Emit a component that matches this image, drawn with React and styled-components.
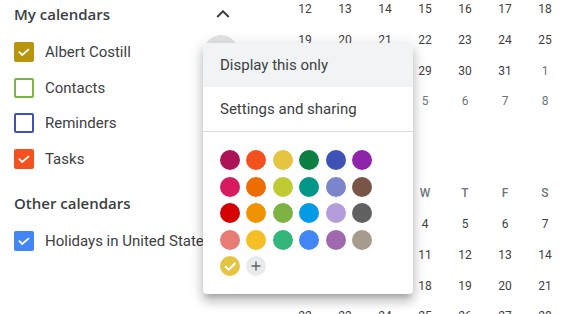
import React from 'react';
import styled, { createGlobalStyle } from 'styled-components';

const GlobalStyle = createGlobalStyle`
  body {
    margin: 0;
    background: #fff;
    font-family: Roboto, "Liberation Sans", sans-serif;
    overflow: hidden;
  }
`;

const Page = styled.div`
  position: relative;
  display: flex;
  width: 577px;
  height: 314px;
  overflow: hidden;
  background: #fff;
`;

const Sidebar = styled.div`
  width: 285px;
  box-sizing: border-box;
  padding: 0 47px 0 14px;
  flex-shrink: 0;
`;

const SectionHeader = styled.div`
  display: flex;
  align-items: center;
  justify-content: space-between;
  height: 28px;
  margin-top: ${p => p.$top || 0}px;
  margin-bottom: 6.5px;
  font-family: "Open Sans", Roboto, sans-serif;
  font-size: 15px;
  font-weight: 600;
  color: #3c4043;
`;

const Chevron = styled.svg`
  width: 14px;
  height: 8px;
  margin-right: 8px;
`;

const CalRow = styled.div`
  display: flex;
  align-items: center;
  height: 35.5px;
  gap: 11px;
`;

const Box = styled.div`
  width: 20px;
  height: 20px;
  box-sizing: border-box;
  border-radius: 2px;
  border: 2px solid ${p => p.$color};
  background: ${p => (p.$checked ? p.$color : '#fff')};
  display: flex;
  align-items: center;
  justify-content: center;
  flex-shrink: 0;
`;

const Label = styled.span`
  flex: 1;
  font-size: 15px;
  color: #3c4043;
  white-space: nowrap;
`;

const MoreButton = styled.div`
  width: 34px;
  height: 34px;
  border-radius: 50%;
  background: #e4e4e4;
  flex-shrink: 0;
`;

const Calendar = styled.div`
  width: 280px;
  margin-top: -6px;
  flex-shrink: 0;
`;

const Week = styled.div`
  display: grid;
  grid-template-columns: repeat(7, 40px);
  height: 30.7px;
`;

const Day = styled.div`
  display: flex;
  align-items: center;
  justify-content: center;
  font-size: 12px;
  color: ${p => (p.$muted ? '#70757a' : '#3c4043')};
`;

const WeekDay = styled(Day)`
  color: #70757a;
  font-weight: 500;
`;

const MonthTitle = styled.div`
  height: 30.7px;
  margin-top: 30.7px;
  display: flex;
  align-items: center;
  padding-left: 10px;
  font-size: 14px;
  font-weight: 500;
  color: #3c4043;
`;

const Popup = styled.div`
  position: absolute;
  left: 203px;
  top: 43px;
  width: 210px;
  background: #fff;
  border-radius: 4px;
  overflow: hidden;
  box-shadow: 0 8px 10px 1px rgba(0, 0, 0, 0.14), 0 3px 14px 2px rgba(0, 0, 0, 0.12),
    0 5px 5px -3px rgba(0, 0, 0, 0.2);
`;

const MenuItem = styled.div`
  height: 44px;
  display: flex;
  align-items: center;
  padding-left: 17px;
  font-size: 15px;
  color: #3c4043;
  background: ${p => (p.$hover ? '#f1f3f4' : '#fff')};
`;

const Divider = styled.div`
  height: 1px;
  background: #dadce0;
`;

const Swatches = styled.div`
  display: grid;
  grid-template-columns: repeat(6, 20px);
  gap: 6.6px 6.4px;
  padding: 18px 17px;
`;

const Swatch = styled.div`
  width: 20px;
  height: 20px;
  border-radius: 50%;
  background: ${p => p.$color};
  display: flex;
  align-items: center;
  justify-content: center;
`;

const Check = ({ size = 20 }) => (
  <svg width={size} height={size} viewBox="0 0 20 20">
    <path d="M3.6 9.6 L7.7 13.7 L16.2 6.4" fill="none" stroke="#fff" strokeWidth="2.2" />
  </svg>
);

const SwatchCheck = () => (
  <svg width="20" height="20" viewBox="0 0 20 20">
    <path d="M5 10.2 L8.8 13.6 L15.4 7" fill="none" stroke="#fff" strokeWidth="2" />
  </svg>
);

const Plus = () => (
  <svg width="20" height="20" viewBox="0 0 20 20">
    <path d="M10 5.5 V14.5 M5.5 10 H14.5" stroke="#5f6368" strokeWidth="1.4" />
  </svg>
);

const myCalendars = [
  { name: 'Albert Costill', color: '#b8950d', checked: true, more: true },
  { name: 'Contacts', color: '#7cb342' },
  { name: 'Reminders', color: '#3f51b5' },
  { name: 'Tasks', color: '#f4511e', checked: true },
];

const colors = [
  '#ad1457', '#f4511e', '#e4c441', '#0b8043', '#3f51b5', '#8e24aa',
  '#d81b60', '#ef6c00', '#c0ca33', '#009688', '#7986cb', '#795548',
  '#d50000', '#f09300', '#7cb342', '#039be5', '#b39ddb', '#616161',
  '#e67c73', '#f6bf26', '#33b679', '#4285f4', '#9e69af', '#a79b8e',
];

const range = (a, b) => Array.from({ length: b - a + 1 }, (_, i) => a + i);

const firstMonth = [
  range(12, 18).map(d => ({ d })),
  range(19, 25).map(d => ({ d })),
  [...range(26, 31).map(d => ({ d })), { d: 1, muted: true }],
  range(2, 8).map(d => ({ d, muted: true })),
];

const secondMonth = [range(1, 7), range(8, 14), range(15, 21), range(22, 28)];

const CalendarRow = ({ cal }) => (
  <CalRow>
    <Box $color={cal.color} $checked={cal.checked}>
      {cal.checked && <Check />}
    </Box>
    <Label>{cal.name}</Label>
    {cal.more && <MoreButton />}
  </CalRow>
);

export default function App() {
  return (
    <Page>
      <GlobalStyle />
      <Sidebar>
        <SectionHeader>
          My calendars
          <Chevron viewBox="0 0 14 8">
            <path d="M1.2 7 L7 1.3 L12.8 7" fill="none" stroke="#3c4043" strokeWidth="2" />
          </Chevron>
        </SectionHeader>
        {myCalendars.map(c => (
          <CalendarRow key={c.name} cal={c} />
        ))}
        <SectionHeader $top={12.5}>Other calendars</SectionHeader>
        <CalendarRow cal={{ name: 'Holidays in United States', color: '#4285f4', checked: true }} />
      </Sidebar>

      <Calendar>
        {firstMonth.map((week, i) => (
          <Week key={i}>
            {week.map((x, j) => (
              <Day key={j} $muted={x.muted}>{x.d}</Day>
            ))}
          </Week>
        ))}
        <MonthTitle>November 2020</MonthTitle>
        <Week>
          {['S', 'M', 'T', 'W', 'T', 'F', 'S'].map((w, i) => (
            <WeekDay key={i}>{w}</WeekDay>
          ))}
        </Week>
        {secondMonth.map((week, i) => (
          <Week key={i}>
            {week.map(d => (
              <Day key={d}>{d}</Day>
            ))}
          </Week>
        ))}
      </Calendar>

      <Popup>
        <MenuItem $hover>Display this only</MenuItem>
        <MenuItem>Settings and sharing</MenuItem>
        <Divider />
        <Swatches>
          {colors.map(c => (
            <Swatch key={c} $color={c} />
          ))}
          <Swatch $color="#e4c441">
            <SwatchCheck />
          </Swatch>
          <Swatch $color="#e8eaed">
            <Plus />
          </Swatch>
        </Swatches>
      </Popup>
    </Page>
  );
}
